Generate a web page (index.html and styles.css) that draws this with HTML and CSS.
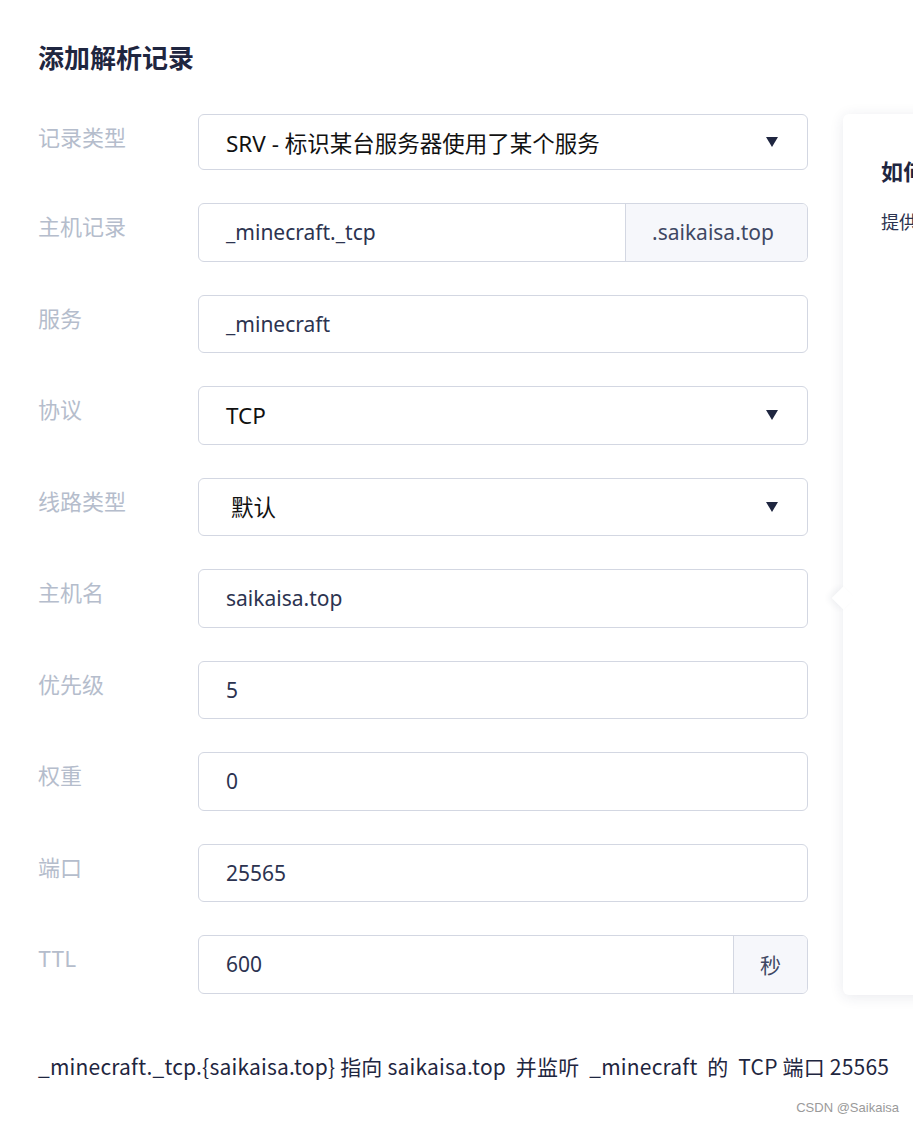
FILE: index.html
```html
<!DOCTYPE html>
<html lang="zh-CN">
<head>
<meta charset="utf-8">
<title>添加解析记录</title>
<link rel="stylesheet" href="styles.css">
</head>
<body>
<div class="page">
  <h1 class="title">添加解析记录</h1>
  <div class="main">
    <div class="form">
      <div class="row first">
        <div class="label">记录类型</div>
        <div class="field select"><span class="value dark">SRV - 标识某台服务器使用了某个服务</span><span class="caret"></span></div>
      </div>
      <div class="row">
        <div class="label">主机记录</div>
        <div class="field"><span class="value">_minecraft._tcp</span><span class="addon wide">.saikaisa.top</span></div>
      </div>
      <div class="row">
        <div class="label">服务</div>
        <div class="field"><span class="value">_minecraft</span></div>
      </div>
      <div class="row">
        <div class="label">协议</div>
        <div class="field select"><span class="value dark">TCP</span><span class="caret"></span></div>
      </div>
      <div class="row">
        <div class="label">线路类型</div>
        <div class="field select"><span class="value dark shift">默认</span><span class="caret"></span></div>
      </div>
      <div class="row">
        <div class="label">主机名</div>
        <div class="field"><span class="value">saikaisa.top</span></div>
      </div>
      <div class="row">
        <div class="label">优先级</div>
        <div class="field"><span class="value">5</span></div>
      </div>
      <div class="row">
        <div class="label">权重</div>
        <div class="field"><span class="value">0</span></div>
      </div>
      <div class="row">
        <div class="label">端口</div>
        <div class="field"><span class="value">25565</span></div>
      </div>
      <div class="row">
        <div class="label">TTL</div>
        <div class="field"><span class="value">600</span><span class="addon narrow">秒</span></div>
      </div>
    </div>
    <aside class="panel">
      <span class="panel-arrow"></span>
      <h2 class="panel-title">如何添加SRV记录</h2>
      <p class="panel-text">提供服务的主机</p>
    </aside>
  </div>
  <p class="summary">_minecraft._tcp.{saikaisa.top} 指向 saikaisa.top&nbsp; 并监听 &nbsp;_minecraft&nbsp; 的 &nbsp;TCP 端口 25565</p>
  <div class="watermark">CSDN @Saikaisa</div>
</div>
</body>
</html>
```

FILE: styles.css
```css
html, body {
  margin: 0;
  padding: 0;
  background: #ffffff;
}

body {
  font-family: "Noto Sans", "Noto Sans CJK SC", sans-serif;
  color: #2c3350;
  overflow: hidden;
}

.page {
  width: 913px;
  height: 1122px;
  position: relative;
  overflow: hidden;
  padding: 0 0 0 38px;
  box-sizing: border-box;
}

.title {
  margin: 0;
  padding-top: 39px;
  font-size: 26px;
  line-height: 36px;
  font-weight: 700;
  color: #1f2640;
  font-family: "Noto Sans CJK SC", sans-serif;
}

.main {
  display: flex;
  align-items: flex-start;
  margin-top: 39px;
}

.form {
  width: 770px;
  flex: none;
  display: flex;
  flex-direction: column;
  gap: 33px;
}

.row {
  display: flex;
  align-items: flex-start;
}

.label {
  width: 160px;
  flex: none;
  padding-top: 7px;
  font-size: 22px;
  line-height: 30px;
  color: #b5bdcc;
  font-family: "Noto Sans CJK SC", sans-serif;
}

.field {
  flex: 1;
  height: 58.5px;
  box-sizing: border-box;
  border: 1px solid #d3d7e2;
  border-radius: 6px;
  display: flex;
  align-items: center;
  overflow: hidden;
  background: #fff;
}

.row.first .field {
  height: 56px;
}

.value {
  flex: 1;
  padding-left: 27px;
  font-size: 21px;
  color: #2c3350;
  white-space: nowrap;
}

.value.dark {
  color: #111111;
  font-size: 22.5px;
}

.value.shift {
  padding-left: 32px;
}

.caret {
  width: 0;
  height: 0;
  border-left: 6.5px solid transparent;
  border-right: 6.5px solid transparent;
  border-top: 10px solid #1f2640;
  margin-right: 29px;
}

.addon {
  align-self: stretch;
  display: flex;
  align-items: center;
  background: #f6f7fb;
  border-left: 1px solid #d3d7e2;
  font-size: 21px;
  color: #3f4763;
  box-sizing: border-box;
}

.addon.wide {
  width: 182px;
  padding-left: 26px;
}

.addon.narrow {
  width: 74px;
  justify-content: center;
}

.panel {
  position: relative;
  margin-left: 35px;
  width: 320px;
  height: 881px;
  flex: none;
  background: #fff;
  border-radius: 6px;
  box-shadow: 0 2px 14px rgba(40, 50, 90, 0.10);
  box-sizing: border-box;
  padding: 41px 0 0 38px;
}

.panel-arrow {
  position: absolute;
  left: -8px;
  top: 476px;
  width: 16px;
  height: 16px;
  background: #fff;
  transform: rotate(45deg);
  box-shadow: -3px 3px 6px rgba(40, 50, 90, 0.06);
}

.panel-title {
  margin: 0;
  font-size: 22px;
  line-height: 30px;
  font-weight: 700;
  color: #1f2640;
  font-family: "Noto Sans CJK SC", sans-serif;
}

.panel-text {
  margin: 24px 0 0;
  font-size: 18px;
  line-height: 24px;
  color: #2c3350;
  font-family: "Noto Sans CJK SC", sans-serif;
}

.summary {
  margin: 56px 0 0;
  font-size: 21px;
  letter-spacing: 0.2px;
  line-height: 30px;
  color: #1f2640;
  white-space: nowrap;
  font-family: "Noto Sans CJK SC", sans-serif;
}

.watermark {
  position: absolute;
  right: 14px;
  bottom: 7px;
  font-family: "Liberation Sans", sans-serif;
  font-size: 13px;
  color: #9a9a9a;
}
```
